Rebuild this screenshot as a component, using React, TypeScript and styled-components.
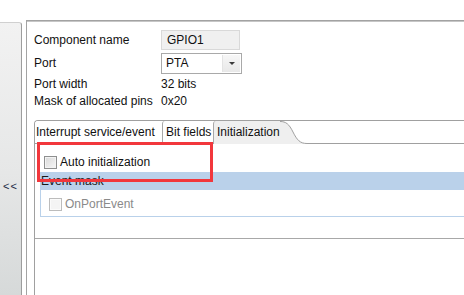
import styled, { createGlobalStyle } from "styled-components";

const GlobalStyle = createGlobalStyle`
  html, body {
    margin: 0;
    padding: 0;
    background: #fff;
  }
  body {
    font-family: "Liberation Sans", Arial, sans-serif;
    font-size: 12px;
    color: #111;
  }
`;

const Screen = styled.div`
  position: relative;
  width: 464px;
  height: 295px;
  overflow: hidden;
  box-sizing: border-box;
  padding-top: 20px;
  display: flex;
  gap: 4px;
`;

const SidePanel = styled.div`
  flex: none;
  width: 21px;
  margin-top: 2px;
  background: linear-gradient(#f2f2f2, #e6e7e7 55%, #d6d9d9);
  border-right: 1px solid #9d9d9d;
  border-top: 1px solid #d0d0d0;
  border-top-right-radius: 3px;
  display: flex;
  flex-direction: column;
  align-items: center;
  padding-top: 155px;
`;

const Collapse = styled.span`
  line-height: 17px;
  font-size: 11px;
  color: #1b2a44;
  letter-spacing: 1px;
`;

const MainPanel = styled.div`
  flex: 1;
  min-width: 0;
  display: flex;
  flex-direction: column;
  border-left: 1px solid #a3a3a3;
  border-top: 1px solid #a2a2a2;
  box-shadow: inset 0 1px 0 #c6c6c6;
  padding: 9px 0 0 7px;
`;

const Form = styled.div`
  display: flex;
  flex-direction: column;
`;

const Row = styled.div<{ $space?: number }>`
  display: flex;
  align-items: center;
  margin-bottom: ${(p) => p.$space ?? 0}px;
`;

const Label = styled.div`
  width: 127px;
  line-height: 17px;
  white-space: nowrap;
`;

const Value = styled.div`
  line-height: 17px;
`;

const TextField = styled.div`
  box-sizing: border-box;
  width: 79px;
  height: 20px;
  padding-left: 5px;
  line-height: 18px;
  background: #f0f0f0;
  border: 1px solid #d9d9d9;
`;

const Select = styled.div`
  box-sizing: border-box;
  width: 81px;
  height: 21px;
  display: flex;
  border: 1px solid #a9a9a9;
  background: #fff;
`;

const SelectText = styled.div`
  flex: 1;
  padding-left: 4px;
  line-height: 19px;
`;

const SelectButton = styled.div`
  width: 17px;
  margin: 1px 1px 1px 0;
  background: linear-gradient(#f6f6f6, #e8e8e8);
  border-left: 1px solid #e3e3e3;
  display: flex;
  align-items: center;
  justify-content: center;
  &::after {
    content: "";
    border-left: 3px solid transparent;
    border-right: 3px solid transparent;
    border-top: 3px solid #3a3a3a;
  }
`;

const TabFolder = styled.div`
  flex: 1;
  margin-top: 10px;
  margin-right: -10px;
  display: flex;
  flex-direction: column;
  border-left: 1px solid #a0a0a0;
  border-top: 1px solid #a0a0a0;
  border-top-left-radius: 4px;
`;

const TabStrip = styled.div`
  display: flex;
  height: 23px;
`;

const Tab = styled.div<{ $width: number; $active?: boolean; $first?: boolean }>`
  flex: none;
  box-sizing: border-box;
  width: ${(p) => p.$width}px;
  padding-left: ${(p) => (p.$first ? 1 : 3)}px;
  line-height: 22px;
  white-space: nowrap;
  background: ${(p) => (p.$active ? "#efefef" : "#fff")};
  border-left: ${(p) => (p.$first ? "none" : "1px solid #a8a8a8")};
  border-bottom: ${(p) => (p.$active ? "none" : "1px solid #a0a0a0")};
  border-top-left-radius: 3px;
`;

const TabFiller = styled.div`
  flex: 1;
  border-bottom: 1px solid #a0a0a0;
`;

const TabBody = styled.div`
  height: 84px;
  border-bottom: 1px solid #a8a8a8;
  padding: 10px 0 0 5px;
`;

const CheckRow = styled.label<{ $indent: number; $disabled?: boolean }>`
  display: flex;
  align-items: center;
  gap: 3px;
  padding-left: ${(p) => p.$indent}px;
  line-height: 17px;
  color: ${(p) => (p.$disabled ? "#8a8a8a" : "#111")};
`;

const Box = styled.span<{ $disabled?: boolean }>`
  box-sizing: border-box;
  width: 13px;
  height: 13px;
  border: 1px solid ${(p) => (p.$disabled ? "#bcbcbc" : "#8e8f8f")};
  background: ${(p) =>
    p.$disabled ? "#f4f4f4" : "linear-gradient(135deg, #d8d8d8, #f7f7f7)"};
  box-shadow: inset 0 0 0 1px ${(p) => (p.$disabled ? "#fbfbfb" : "#f3f3f3")};
`;

const Group = styled.div`
  margin-top: 1px;
  border: 1px solid #b9d1ea;
  border-top: none;
`;

const GroupHeader = styled.div`
  height: 18px;
  line-height: 19px;
  padding-left: 1px;
  margin-left: -1px;
  background: #bad1ea;
  color: #1a1a1a;
`;

const GroupBody = styled.div`
  padding: 6px 0 3px;
`;

const Highlight = styled.div`
  position: absolute;
  left: 37px;
  top: 142px;
  width: 176px;
  height: 40px;
  box-sizing: border-box;
  border: 3px solid #f2373c;
  pointer-events: none;
`;

function TabCurve() {
  return (
    <svg width="27" height="23" viewBox="0 0 27 23" style={{ flex: "none", display: "block" }}>
      <path d="M0 0.5 C6 0.5 9 3 13 11 C17 19 20 22.5 27 22.5 L27 23 L0 23 Z" fill="#efefef" />
      <path d="M0 0.5 C6 0.5 9 3 13 11 C17 19 20 22.5 27 22.5" fill="none" stroke="#a0a0a0" strokeWidth="1" />
    </svg>
  );
}

export default function App() {
  return (
    <>
      <GlobalStyle />
      <Screen>
        <SidePanel>
          <Collapse>&lt;&lt;</Collapse>
        </SidePanel>
        <MainPanel>
          <Form>
            <Row $space={3}>
              <Label>Component name</Label>
              <TextField>GPIO1</TextField>
            </Row>
            <Row $space={2}>
              <Label>Port</Label>
              <Select>
                <SelectText>PTA</SelectText>
                <SelectButton />
              </Select>
            </Row>
            <Row>
              <Label>Port width</Label>
              <Value>32 bits</Value>
            </Row>
            <Row>
              <Label>Mask of allocated pins</Label>
              <Value>0x20</Value>
            </Row>
          </Form>
          <TabFolder>
            <TabStrip>
              <Tab $width={127} $first>Interrupt service/event</Tab>
              <Tab $width={51}>Bit fields</Tab>
              <Tab $width={67} $active>Initialization</Tab>
              <TabCurve />
              <TabFiller />
            </TabStrip>
            <TabBody>
              <CheckRow $indent={4}>
                <Box />
                Auto initialization
              </CheckRow>
              <Group>
                <GroupHeader>Event mask</GroupHeader>
                <GroupBody>
                  <CheckRow $indent={8} $disabled>
                    <Box $disabled />
                    OnPortEvent
                  </CheckRow>
                </GroupBody>
              </Group>
            </TabBody>
          </TabFolder>
        </MainPanel>
        <Highlight />
      </Screen>
    </>
  );
}
